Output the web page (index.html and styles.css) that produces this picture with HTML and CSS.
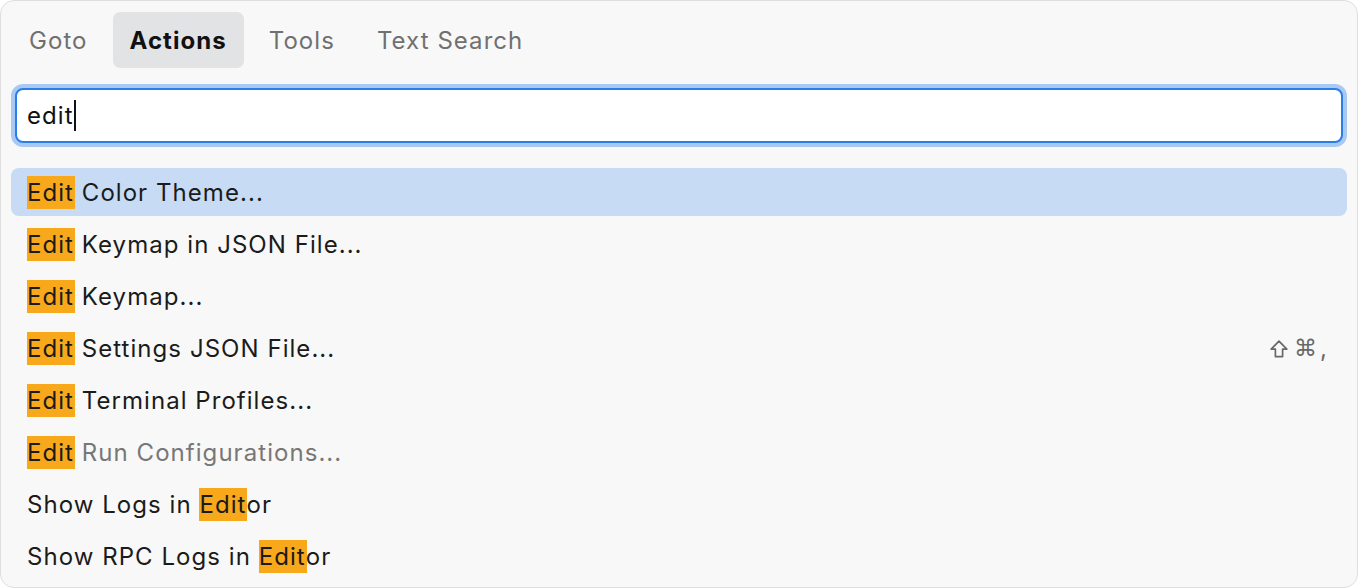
FILE: index.html
```html
<!DOCTYPE html>
<html>
<head>
<meta charset="utf-8">
<link rel="stylesheet" href="styles.css">
</head>
<body>
<div class="panel">
  <div class="tabs">
    <div class="tab">Goto</div>
    <div class="tab active">Actions</div>
    <div class="tab">Tools</div>
    <div class="tab">Text Search</div>
  </div>
  <div class="search">
    <div class="input">edit<span class="caret"></span></div>
  </div>
  <div class="list">
    <div class="row selected"><span class="label"><span class="hl">Edit</span> Color Theme...</span></div>
    <div class="row"><span class="label"><span class="hl">Edit</span> Keymap in JSON File...</span></div>
    <div class="row"><span class="label"><span class="hl">Edit</span> Keymap...</span></div>
    <div class="row"><span class="label"><span class="hl">Edit</span> Settings JSON File...</span><span class="keys"><svg class="shift" width="18" height="18" viewBox="0 0 18 18"><path d="M9 1.2 L16.8 9.2 H12.6 V16.6 H5.4 V9.2 H1.2 Z" fill="none" stroke="currentColor" stroke-width="1.7" stroke-linejoin="round"/></svg><span class="cmd">⌘</span><span class="comma">,</span></span></div>
    <div class="row"><span class="label"><span class="hl">Edit</span> Terminal Profiles...</span></div>
    <div class="row"><span class="label"><span class="hl">Edit</span><span class="muted"> Run Configurations...</span></span></div>
    <div class="row"><span class="label">Show Logs in <span class="hl">Edit</span>or</span></div>
    <div class="row"><span class="label">Show RPC Logs in <span class="hl">Edit</span>or</span></div>
  </div>
</div>
</body>
</html>
```
FILE: styles.css
```css
html, body {
  margin: 0;
  padding: 0;
  background: #ffffff;
}
body {
  font-family: Inter, "Liberation Sans", sans-serif;
  font-size: 24px;
  letter-spacing: 1.05px;
  color: #1b1b1b;
}
.panel {
  box-sizing: border-box;
  width: 1358px;
  height: 588px;
  border: 1px solid #dedede;
  border-radius: 14px;
  background: #f8f8f8;
  padding: 11px 10px 0 10px;
  overflow: hidden;
}
.tabs {
  display: flex;
  gap: 8px;
  margin-left: 1px;
}
.tab {
  height: 56px;
  display: flex;
  align-items: center;
  padding: 0 17px 0 17px;
  border-radius: 7px;
  color: #707070;
}
.tab.active {
  background: #e2e3e5;
  color: #111111;
  font-weight: 700;
}
.search {
  margin-top: 20px;
  padding: 0 4px;
}
.input {
  box-sizing: border-box;
  height: 55px;
  border: 2px solid #2b7ee6;
  border-radius: 8px;
  box-shadow: 0 0 0 4px #a8c9f4;
  background: #ffffff;
  padding: 0 10px;
  display: flex;
  align-items: center;
  color: #111111;
}
.caret {
  display: inline-block;
  width: 2px;
  height: 31px;
  background: #111111;
  margin-left: 0;
}
.list {
  margin-top: 25px;
  display: flex;
  flex-direction: column;
  gap: 4px;
}
.row {
  height: 48px;
  display: flex;
  align-items: center;
  justify-content: space-between;
  padding: 0 20px 0 16px;
  border-radius: 8px;
}
.row.selected {
  background: #c7dbf5;
}
.hl {
  display: inline-block;
  background: #f8a81b;
  line-height: 33px;
  letter-spacing: 1.05px;
  margin-right: -1px;
  padding-right: 1px;
}
.muted {
  color: #777777;
}
.keys {
  display: flex;
  align-items: center;
  color: #686868;
  letter-spacing: 0;
}
.shift {
  display: block;
  margin-top: 1px;
}
.cmd {
  font-family: "DejaVu Sans", sans-serif;
  font-size: 23px;
  margin-left: 6px;
}
.comma {
  margin-left: 3px;
}
```
